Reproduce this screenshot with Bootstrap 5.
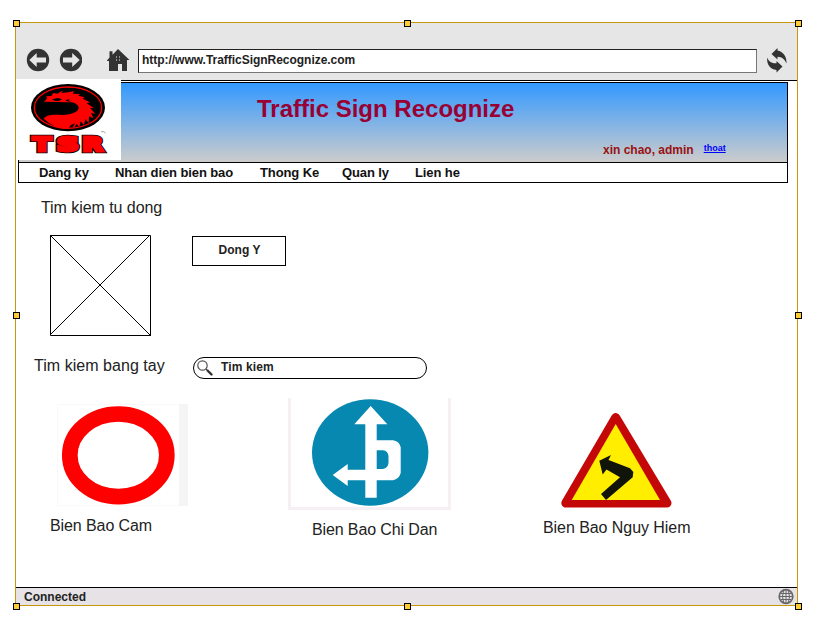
<!DOCTYPE html>
<html lang="vi">
<head>
<meta charset="utf-8">
<meta name="viewport" content="width=device-width, initial-scale=1">
<title>Traffic Sign Recognize</title>
<link href="https://cdn.jsdelivr.net/npm/bootstrap@5.3.0/dist/css/bootstrap.min.css" rel="stylesheet">
<style>
body{font-family:"Liberation Sans",Arial,sans-serif;font-size:16px;line-height:20px;color:#222;background:#fff;padding:22px 0 0 15px;min-height:638px}
svg{display:block;flex:none}
.browser{width:783px;height:584px;border:1px solid #c8960c}
.handle{width:7px;height:7px;border:1px solid #000;background:#fc3;z-index:5}
.h-t{top:-3px}.h-m{top:289px}.h-b{top:580px}
.h-l{left:-3px}.h-c{left:388px}.h-r{left:779px}
.toolbar{height:58px;background:#e6e6e6;border-bottom:1px solid #000;padding:25px 9px 0 10px}
.address{width:619px;height:24px;border:1px solid #222;border-right-color:#777;border-bottom-color:#777;background:#fff;font-size:12px;line-height:14px;padding:3px 3px 0;margin:1px 9px 0 8px;color:#222;letter-spacing:-.03px}
.site{width:770px;margin:1px 0 0 2px;border:1px solid #000}
.banner{height:80px;border-bottom:1px solid #000;background:linear-gradient(#39f,#ccc);padding-top:12px}
.banner h1{font-size:24px;line-height:28px;color:#990033;margin:0 0 0 238px}
.account{font-size:12px;line-height:14px;color:#991111;margin:20px 0 0 584px}
.account a{font-size:9px;line-height:11px;color:#00f;margin-left:10px}
.brand{left:0;top:56px;width:105px;height:81px;background:#fff}
.menu{height:19px;font-size:13px;line-height:19px;color:#111;padding-left:20px}
.menu .nav-link{padding:0;color:#111;letter-spacing:-.1px}
.m1{width:76px}.m2{width:145px}.m3{width:82px}.m4{width:73px}
.auto-title{padding:15px 0 0 25px;letter-spacing:-.06px}
.auto-row{padding:17px 0 0 34px}
.agree{width:94px;height:30px;border:1px solid #000;border-radius:0;font-size:12px;line-height:14px;padding:6px 0 0 1px;color:#222;margin:1px 0 0 41px}
.hand-row{padding:20px 0 0 18px}
.hand-title{width:159px;letter-spacing:.04px}
.searchbox{width:234px;height:22px;border:1px solid #000;border-radius:11px;font-size:12px;line-height:14px;margin-top:1px;padding-left:3px}
.searchbox span{padding-top:2px;letter-spacing:.12px}
.signs{height:141px;margin-top:19px}
.sign{width:237px}
.sign p{margin:0;letter-spacing:-.09px}
.s1 p{padding:9px 0 0 34px}.s2 p{padding:10px 0 0 59px;letter-spacing:-.12px}.s3 p{padding:8px 0 0 53px;letter-spacing:-.06px}
.s1 svg{margin:6px 0 0 41px}.s2 svg{margin-left:35px}.s3 svg{margin:12px 0 0 69px}
.statusbar{height:18px;border-top:1px solid #000;background:#e6e2e6;font-size:12px;line-height:18px;padding:0 3px 0 8px}
</style>
<script src="https://cdn.jsdelivr.net/npm/bootstrap@5.3.0/dist/js/bootstrap.bundle.min.js"></script>
</head>
<body>
<div class="browser position-relative d-flex flex-column">
  <div class="toolbar d-flex align-items-start">
    <svg width="24" height="24" viewBox="0 0 24 24"><circle cx="12" cy="12" r="11.200" fill="#333"/><path d="M3.300 12l7.400-7v4.500H20v5h-9.300V19z" fill="#e6e6e6"/></svg>
    <svg class="ms-2" width="24" height="24" viewBox="0 0 24 24"><circle cx="13" cy="12" r="11.200" fill="#333"/><path d="M21.700 12l-7.500-7v4.500H5v5h9.200V19z" fill="#e6e6e6"/></svg>
    <svg class="ms-4" width="24" height="24" viewBox="0 0 24 24"><path d="M1 12.500 3.500 9.500V3.300h3v3.500L12 1 23.500 12H21v11h-5v-7h-4v7H3V13H1z" fill="#333"/><path d="M10 8.500h1v1h-1zm3 0h1v1h-1zm-3 3h1v1h-1zm3 0h1v1h-1z" fill="#eee"/></svg>
    <div class="address fw-bold">http://www.TrafficSignRecognize.com</div>
    <svg width="22" height="26" viewBox="0 0 22 26"><path d="M5.500 6 11.500 0v2.500C17 3.500 21 8.500 20.500 15.500 18.500 11 16 9 11.500 8.800V11.500z" fill="#333"/><path d="M16.500 18.500 10.500 24.500V22C4 21.500.500 16 1.200 9.500 3 14 6 15.500 10.500 15.300V13z" fill="#333"/></svg>
  </div>
  <header class="site">
    <div class="banner">
      <h1 class="fw-bold">Traffic Sign Recognize</h1>
      <div class="account d-flex fw-bold"><span>xin chao, admin</span><a href="#">thoat</a></div>
    </div>
    <nav class="menu nav fw-bold flex-nowrap">
      <a class="nav-link m1" href="#">Dang ky</a>
      <a class="nav-link m2" href="#">Nhan dien bien bao</a>
      <a class="nav-link m3" href="#">Thong Ke</a>
      <a class="nav-link m4" href="#">Quan ly</a>
      <a class="nav-link" href="#">Lien he</a>
    </nav>
  </header>
  <div class="brand position-absolute">
    <svg width="105" height="81" viewBox="18 12 315 243">
      <ellipse cx="174" cy="98" rx="111" ry="71"/>
      <ellipse cx="174" cy="98" rx="101" ry="62" fill="none" stroke="red" stroke-width="4"/>
      <path fill="red" d="M102 80 112 70 108 64 124 63 130 54 142 56 160 46 154 54 174 52 193 49 188 56 210 57 205 62 224 67 218 71 240 82 230 85 252 99 240 98 256 117 243 113 250 130 237 124 236 144 226 133 222 150 212 139 208 156 199 147 193 158 186 152 178 162Q136 164 101 131C112 116 134 119 158 120 182 119 208 112 206 96 202 86 190 82 178 82 162 94 148 98L134 91 148 87 156 82 134 83 120 80 109 87z"/>
      <path d="M126 73 144 69 156 73 146 78 134 77zM166 76 178 72 175 77 186 77 176 80z"/>
      <path d="M176 158 184 149 196 145 188 155z"/>
      <g font-family="DejaVu Sans, sans-serif" font-weight="700" font-size="60" fill="#000" stroke="#000" stroke-width="14">
        <text x="68" y="229" textLength="55" lengthAdjust="spacingAndGlyphs">T</text>
        <text x="140" y="229" textLength="66" lengthAdjust="spacingAndGlyphs">S</text>
        <text x="217" y="229" textLength="62" lengthAdjust="spacingAndGlyphs">R</text>
      </g>
      <g font-family="DejaVu Sans, sans-serif" font-weight="700" font-size="60" fill="red" stroke="red" stroke-width="9">
        <text x="68" y="229" textLength="55" lengthAdjust="spacingAndGlyphs">T</text>
        <text x="140" y="229" textLength="66" lengthAdjust="spacingAndGlyphs">S</text>
        <text x="217" y="229" textLength="62" lengthAdjust="spacingAndGlyphs">R</text>
      </g>
      <path d="M273 170h8l6 4" fill="none" stroke="#777" stroke-width="2"/>
    </svg>
  </div>
  <main class="flex-grow-1">
    <div class="auto-title">Tim kiem tu dong</div>
    <div class="auto-row d-flex align-items-start">
      <svg width="101" height="101" viewBox="0 0 101 101" fill="none" stroke="#000"><path d="M.500.500h100v100H.500z"/><path d="M0 0l101 101M100 0L0 100"/></svg>
      <button class="btn agree fw-bold d-flex justify-content-center align-items-start" type="button">Dong Y</button>
    </div>
    <div class="hand-row d-flex align-items-start">
      <div class="hand-title">Tim kiem bang tay</div>
      <div class="searchbox d-flex fw-bold">
        <svg class="me-2" width="16" height="18" viewBox="0 0 16 18"><circle cx="5.500" cy="7.500" r="4.700" fill="#fff" stroke="#555" stroke-width="1.200"/><path d="M9 11l1.500 1.500" stroke="#555"/><path d="M10.500 12.500l4 4" stroke="#333" stroke-width="2.400" stroke-linecap="round"/></svg>
        <span>Tim kiem</span>
      </div>
    </div>
    <div class="signs d-flex align-items-start">
      <div class="sign s1">
        <svg width="132" height="103" viewBox="0 0 132 103"><path d="M.500 101.500V.500H122M.500 101.500H122" fill="none" stroke="#f9f9f9"/><path d="M122 0h9v102h-9z" fill="#f5f5f5"/><ellipse cx="61.300" cy="51.300" rx="48.500" ry="41.300" fill="#fff" stroke="red" stroke-width="15.700"/></svg>
        <p>Bien Bao Cam</p>
      </div>
      <div class="sign s2">
        <svg width="163" height="112" viewBox="0 0 163 112"><path d="M1.500 0v110.500h160V0" fill="none" stroke="#f6f0f5" stroke-width="3"/><ellipse cx="82.200" cy="54.500" rx="58.200" ry="53.200" fill="#0788b0"/><path fill="#fff" d="M82.700 8 99.300 26.300H88.700V42.300H105Q111 43 112.700 49V75Q111 81 105 82.300H88.700V99.700H77.300V82.300H59.700V88L44.700 77 59.700 66V71.700H77.300V26.300H66.300zM88.700 52.300V71H95Q100 70 100.500 65V58Q100 53 95 52.300z" fill-rule="evenodd"/></svg>
        <p>Bien Bao Chi Dan</p>
      </div>
      <div class="sign s3">
        <svg width="114" height="100" viewBox="0 0 114 100"><path d="M56.700 7.500 6.800 93H108z" fill="#c40808" stroke="#c40808" stroke-width="9" stroke-linejoin="round"/><path d="M56.700 14 12.700 90H101z" fill="#fe0"/><path fill="#111408" d="M40.300 50.700 52 45 49.500 50 71 58.300 74.300 62 73.700 67.300 47 90 42 84 61 67.300 47.500 59.500 43.700 64.500z"/></svg>
        <p>Bien Bao Nguy Hiem</p>
      </div>
    </div>
  </main>
  <footer class="statusbar d-flex justify-content-between fw-bold"><span>Connected</span>
    <svg width="16" height="17" viewBox="0 0 16 17"><circle cx="8" cy="8.500" r="6.800" fill="#e6e2e6" stroke="#666" stroke-width="1.700"/><path d="M8 2v13M2 8.500h12M3 5.500h10M3 11.500h10M5.500 3Q3.500 8.500 5.500 14M10.500 3Q12.500 8.500 10.500 14" fill="none" stroke="#666"/></svg>
  </footer>
  <i class="handle position-absolute h-t h-l"></i><i class="handle position-absolute h-t h-c"></i><i class="handle position-absolute h-t h-r"></i>
  <i class="handle position-absolute h-m h-l"></i><i class="handle position-absolute h-m h-r"></i>
  <i class="handle position-absolute h-b h-l"></i><i class="handle position-absolute h-b h-c"></i><i class="handle position-absolute h-b h-r"></i>
</div>
</body>
</html>
